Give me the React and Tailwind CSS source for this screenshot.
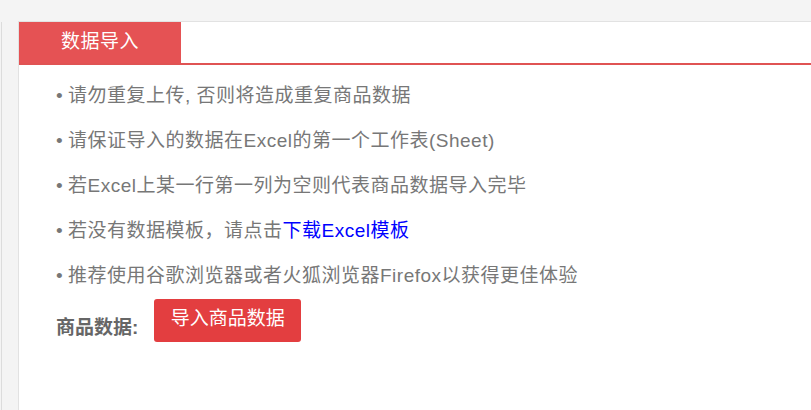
const tips = [
  "请勿重复上传, 否则将造成重复商品数据",
  "请保证导入的数据在Excel的第一个工作表(Sheet)",
  "若Excel上某一行第一列为空则代表商品数据导入完毕",
];

export default function App() {
  return (
    <div
      className="flex h-[410px] w-[811px] overflow-hidden bg-[#f4f4f4]"
      style={{ fontFamily: '"Liberation Sans", "Noto Sans CJK SC", sans-serif' }}
    >
      {/* left sidebar edge */}
      <div className="ml-[1px] mt-[22px] w-[17px] shrink-0 border-l border-[#dcdcdc] bg-[#f4f4f4]" />

      {/* panel */}
      <div className="mt-[21px] flex-1 border-l border-t border-[#e2e2e2] bg-white">
        <div className="flex h-[43px] border-b-2 border-[#e05353]">
          <div className="flex w-[162px] items-center justify-center bg-[#e55254] pb-[1px] text-[19px] tracking-[0.5px] text-white">
            数据导入
          </div>
        </div>

        <ul className="pl-[37px] pt-[17px] text-[19px] leading-[28px] tracking-[0.5px] text-[#777]">
          {tips.map((t) => (
            <li key={t} className="flex h-[45px] items-start">
              <span className="mr-[5px] w-[7px]">•</span>
              {t}
            </li>
          ))}
          <li className="flex h-[45px] items-start">
            <span className="mr-[5px] w-[7px]">•</span>
            若没有数据模板，请点击<a className="text-[#0000ff]">下载Excel模板</a>
          </li>
          <li className="flex h-[45px] items-start">
            <span className="mr-[5px] w-[7px]">•</span>
            推荐使用谷歌浏览器或者火狐浏览器Firefox以获得更佳体验
          </li>
        </ul>

        <div className="-mt-[8px] flex items-start pl-[37px]">
          <span className="mt-[15px] text-[19px] leading-[28px] font-bold text-[#666]">商品数据:</span>
          <button className="ml-[16px] h-[43px] w-[147px] rounded-[3px] bg-[#e33e40] pb-[2px] text-[19px] text-white">
            导入商品数据
          </button>
        </div>
      </div>
    </div>
  );
}
